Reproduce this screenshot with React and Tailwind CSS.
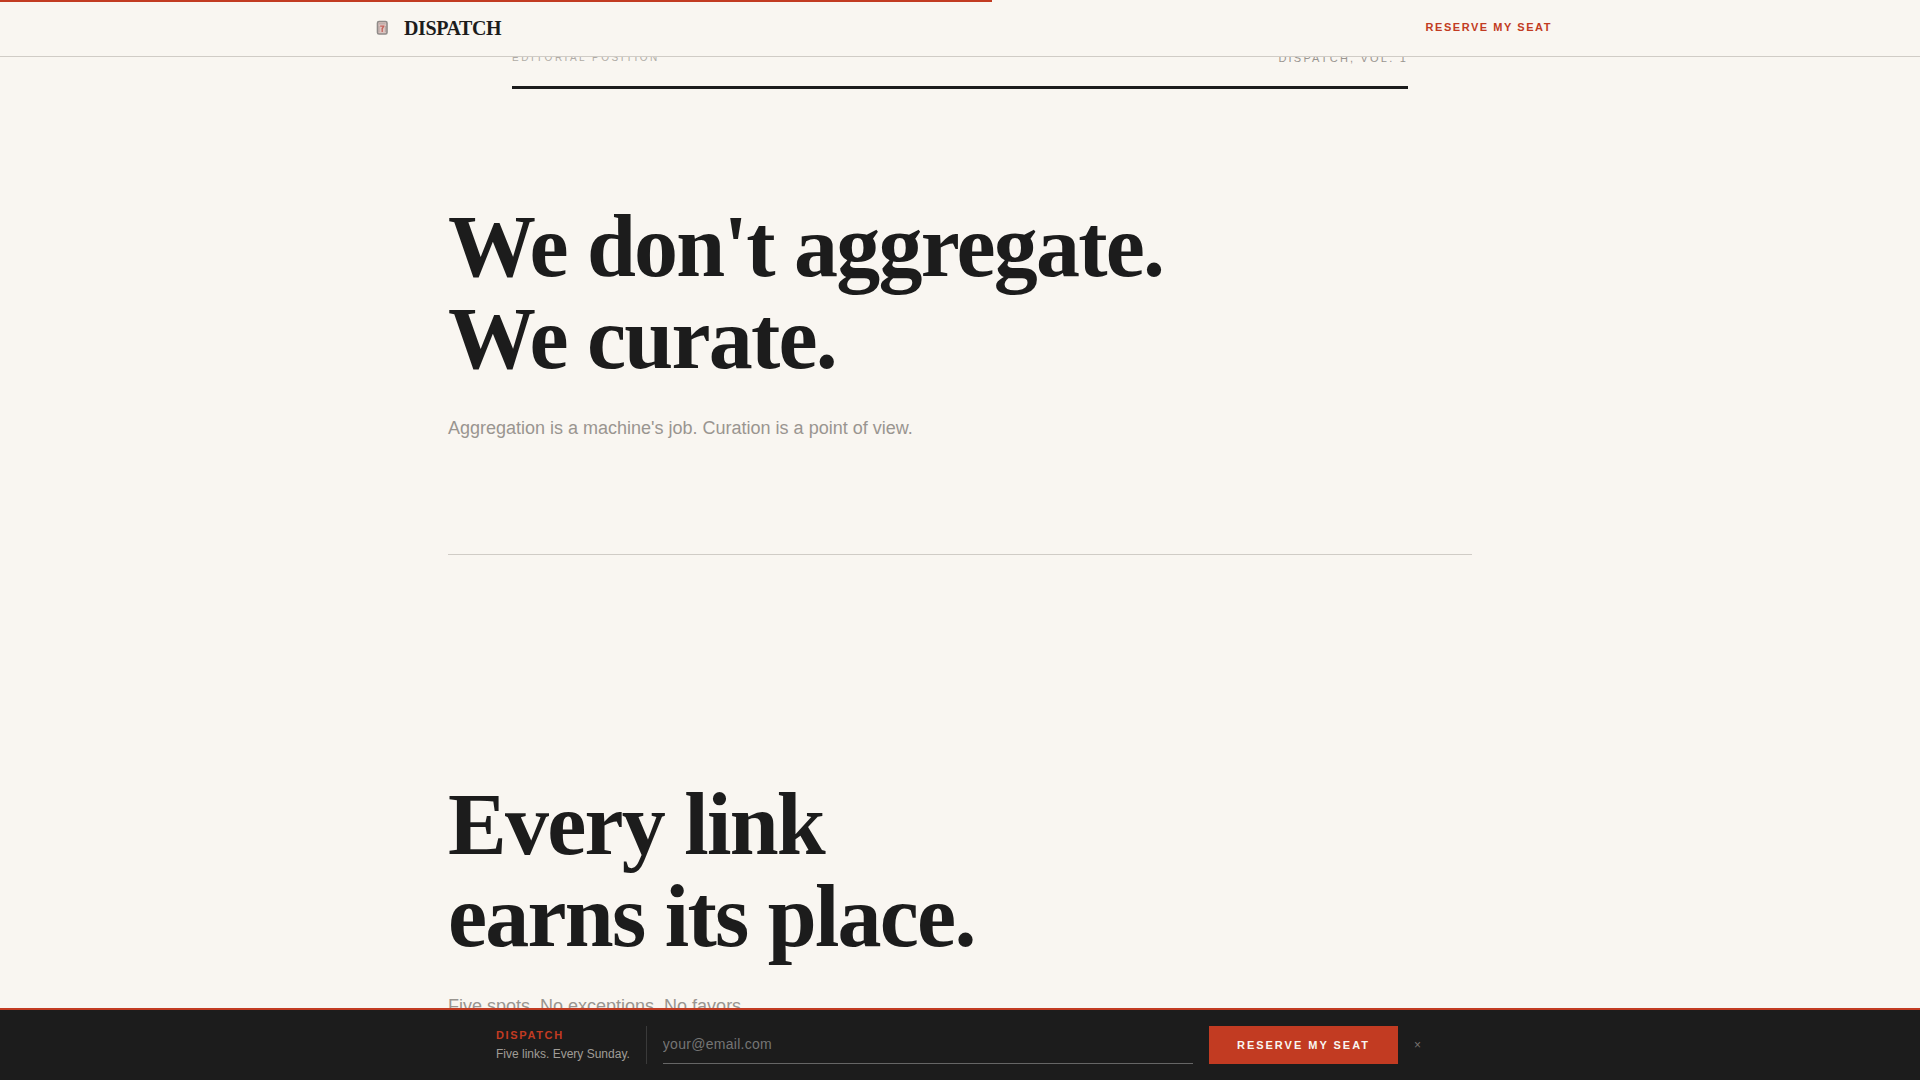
import React, { useState } from "react";

const READ_PROGRESS = 51.67;

const statements = [
  {
    lines: ["We don't aggregate.", "We curate."],
    note: "Aggregation is a machine's job. Curation is a point of view.",
  },
  {
    lines: ["Every link", "earns its place."],
    note: "Five spots. No exceptions. No favors.",
  },
];

function LogoMark() {
  return (
    <svg viewBox="0 0 28 28" className="size-7" aria-hidden="true">
      <rect x="9.500" y="7.500" width="9.500" height="12.500" rx="1.500" fill="#dcc4c0" stroke="#8f8b89" strokeWidth="1.600" />
      <path d="M11 9.800h6.500M11 12v6.200M17.400 12v6.200" stroke="#b3a5a2" strokeWidth="1" fill="none" />
      <path d="M12.200 12.200h4.200M15.800 12.200L13.800 15.300M14.200 14v4" stroke="#c4625a" strokeWidth="1.300" fill="none" />
    </svg>
  );
}

function Header() {
  return (
    <header className="fixed inset-x-0 top-0 z-20 border-b border-[#d0ccc6] bg-[#f9f6f1]">
      <div className="absolute left-0 top-0 h-0.5 bg-[#c23b22]" style={{ width: `${READ_PROGRESS}%` }} />
      <div className="mx-auto flex h-14 max-w-7xl items-center justify-between px-12">
        <a href="#top" className="flex items-center gap-2">
          <LogoMark />
          <span className="font-['Liberation_Serif',serif] text-xl font-bold tracking-[-0.02em]">DISPATCH</span>
        </a>
        <a href="#reserve" className="pb-0.5 text-[11px] font-bold uppercase tracking-[0.14em] text-[#c23b22]">
          Reserve my seat
        </a>
      </div>
    </header>
  );
}

function Statement({ lines, note }) {
  return (
    <section className="mx-auto mb-56 max-w-5xl border-b border-[#d0ccc6] pb-28 last:mb-0 last:border-0 last:pb-0">
      <h2 className="font-['Liberation_Serif',serif] text-[88px] font-bold leading-[1.05] tracking-[-0.02em]">
        {lines.map((line) => (
          <span key={line} className="block">
            {line}
          </span>
        ))}
      </h2>
      <p className="mt-7 text-lg leading-7 text-[#999590]">{note}</p>
    </section>
  );
}

function SignupBar({ onClose }) {
  const [email, setEmail] = useState("");

  return (
    <div className="fixed inset-x-0 bottom-0 z-20 border-t-2 border-[#c23b22] bg-[#1c1c1c]">
      <form
        id="reserve"
        className="mx-auto flex max-w-[960px] items-stretch gap-4 p-4"
        onSubmit={(e) => e.preventDefault()}
      >
        <div className="flex flex-col justify-between border-r border-[#3a3a3a] pr-4">
          <span className="text-[11px] font-bold leading-[18px] tracking-[0.15em] text-[#c23b22]">DISPATCH</span>
          <label htmlFor="email" className="text-xs leading-5 text-[#a09c97]">
            Five links. Every Sunday.
          </label>
        </div>
        <input
          id="email"
          type="email"
          value={email}
          placeholder="your@email.com"
          onChange={(e) => setEmail(e.target.value)}
          className="min-w-0 flex-1 border-b border-[#666] bg-transparent pb-0.5 text-sm tracking-[0.02em] text-[#f9f6f1] outline-none placeholder:text-[#757575]"
        />
        <button
          type="submit"
          className="h-[38px] bg-[#c23b22] px-7 text-[11px] font-bold uppercase tracking-[0.18em] text-[#f9f6f1]"
        >
          Reserve my seat
        </button>
        <button type="button" aria-label="Dismiss" onClick={onClose} className="w-2.5 text-left text-xs text-[#77736f]">
          ×
        </button>
      </form>
    </div>
  );
}

function App() {
  const [showBar, setShowBar] = useState(true);

  return (
    <div
      id="top"
      className="min-h-screen bg-[#f9f6f1] font-['Liberation_Sans',sans-serif] text-[#1c1c1c]"
    >
      <Header />
      <main className="pt-[50px]">
        <div className="mx-auto mb-28 flex max-w-4xl items-center justify-between border-b-[3px] border-[#1c1c1c] pb-5">
          <span className="text-[10px] uppercase leading-4 tracking-[0.25em] text-[#b0aca6]">Editorial position</span>
          <span className="text-[11px] uppercase leading-4 tracking-[0.2em] text-[#999590]">Dispatch, Vol. 1</span>
        </div>
        <div className="pb-14">
          {statements.map((statement) => (
            <Statement key={statement.note} {...statement} />
          ))}
        </div>
      </main>
      {showBar && <SignupBar onClose={() => setShowBar(false)} />}
    </div>
  );
}

export default App;
